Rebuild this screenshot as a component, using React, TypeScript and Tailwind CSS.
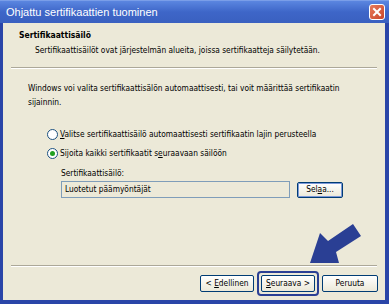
import React from "react";

const font = { fontFamily: '"DejaVu Sans Condensed", "DejaVu Sans", Tahoma, sans-serif' };

function XpButton({ label, u, rest }: { label?: string; u: string; rest: string }) {
  return (
    <div className="h-[17px] w-[54px] rounded-[2px] border border-[#003c74] bg-gradient-to-b from-[#ffffff] to-[#ece9d8] flex items-center justify-center text-black">
      <span className="whitespace-pre">
        {label}
        <span className="underline">{u}</span>
        {rest}
      </span>
    </div>
  );
}

export default function App() {
  return (
    <div
      className="w-[389px] h-[304px] bg-[#2a45a8] flex flex-col overflow-hidden relative"
      style={font}
    >
      {/* title bar */}
      <div className="h-[23px] bg-gradient-to-b from-[#5b86e0] via-[#3e66c8] to-[#3a60c0] flex items-center pl-[6px] pr-[4px] border-t border-[#7a9ee8]">
        <span
          className="text-white text-[11px] flex-1"
          style={{ fontFamily: '"Liberation Sans", Arial, sans-serif' }}
        >
          Ohjattu sertifikaattien tuominen
        </span>
        <div className="w-[16px] h-[16px] rounded-[3px] border border-white bg-gradient-to-br from-[#e87a5a] to-[#c8442a] flex items-center justify-center">
          <svg width="10" height="10" viewBox="0 0 10 10">
            <path d="M2 2 L8 8 M8 2 L2 8" stroke="white" strokeWidth="2" strokeLinecap="square" />
          </svg>
        </div>
      </div>

      {/* body */}
      <div className="flex-1 ml-[3px] mr-[4px] mb-[4px] bg-[#ece9d8] flex flex-col text-[8.3px] text-black">
        <div className="pl-[16px] pt-[6px] h-[44px]">
          <div className="font-bold leading-[12px] text-[8.5px]">Sertifikaattisäilö</div>
          <div className="pl-[16px] mt-[3px] leading-[12px]">
            Sertifikaattisäilöt ovat järjestelmän alueita, joissa sertifikaatteja säilytetään.
          </div>
        </div>
        <div className="mx-[8px] h-[2px] border-t border-[#aca899] border-b border-b-white" />

        <div className="pl-[25px] pr-[30px] mt-[12px] leading-[14px]">
          Windows voi valita sertifikaattisälön automaattisesti, tai voit määrittää sertifikaatin sijainnin.
        </div>

        <div className="pl-[44px] mt-[20px] flex flex-col gap-[8px]">
          <div className="flex items-center gap-[2px] h-[11px]">
            <div className="w-[11px] h-[11px] rounded-full border border-[#1c5180] bg-white" />
            <span>
              <span className="underline">V</span>alitse sertifikaattisäilö automaattisesti sertifikaatin lajin perusteella
            </span>
          </div>
          <div className="flex items-center gap-[2px] h-[11px]">
            <div className="w-[11px] h-[11px] rounded-full border border-[#1c5180] bg-white flex items-center justify-center">
              <div className="w-[5px] h-[5px] rounded-full bg-[#21a121]" />
            </div>
            <span>
              Sijoita kaikki sertifikaatit s<span className="underline">e</span>uraavaan säilöön
            </span>
          </div>
        </div>

        <div className="pl-[58px] mt-[8px] leading-[12px]">Sertifikaattisäilö:</div>
        <div className="pl-[58px] mt-[2px] flex items-center gap-[7px]">
          <div className="w-[229px] h-[17px] border border-[#7f9db9] bg-[#ece9d8] flex items-center pl-[3px]">
            Luotetut päämyöntäjät
          </div>
          <div className="w-[46px] h-[16px] rounded-[2px] border border-[#003c74] bg-gradient-to-b from-[#ffffff] to-[#ece9d8] flex items-center justify-center shadow-[inset_0_0_0_1px_#7b98d8]">
            <span>
              Sel<span className="underline">a</span>a...
            </span>
          </div>
        </div>

        <div className="flex-1" />
        <div className="mx-[8px] h-[2px] border-t border-[#aca899] border-b border-b-white" />
        <div className="h-[33px] flex items-center justify-end pr-[7px] gap-[6px]">
          <XpButton label="< " u="E" rest="dellinen" />
          <div className="rounded-[4px] border-[2px] border-[#2a3f94] p-[2px] -mx-[3px]">
            <XpButton u="S" rest="euraava >" />
          </div>
          <div className="h-[17px] w-[56px] rounded-[2px] border border-[#003c74] bg-gradient-to-b from-[#ffffff] to-[#ece9d8] flex items-center justify-center">
            Peruuta
          </div>
        </div>
      </div>

      {/* pointer arrow */}
      <svg className="absolute left-0 top-0" width="389" height="304" viewBox="0 0 389 304">
        <polygon
          points="310,263 320,233 328,241 353,224 361,236 336,252 339,263"
          fill="#2a3f94"
        />
      </svg>
    </div>
  );
}
